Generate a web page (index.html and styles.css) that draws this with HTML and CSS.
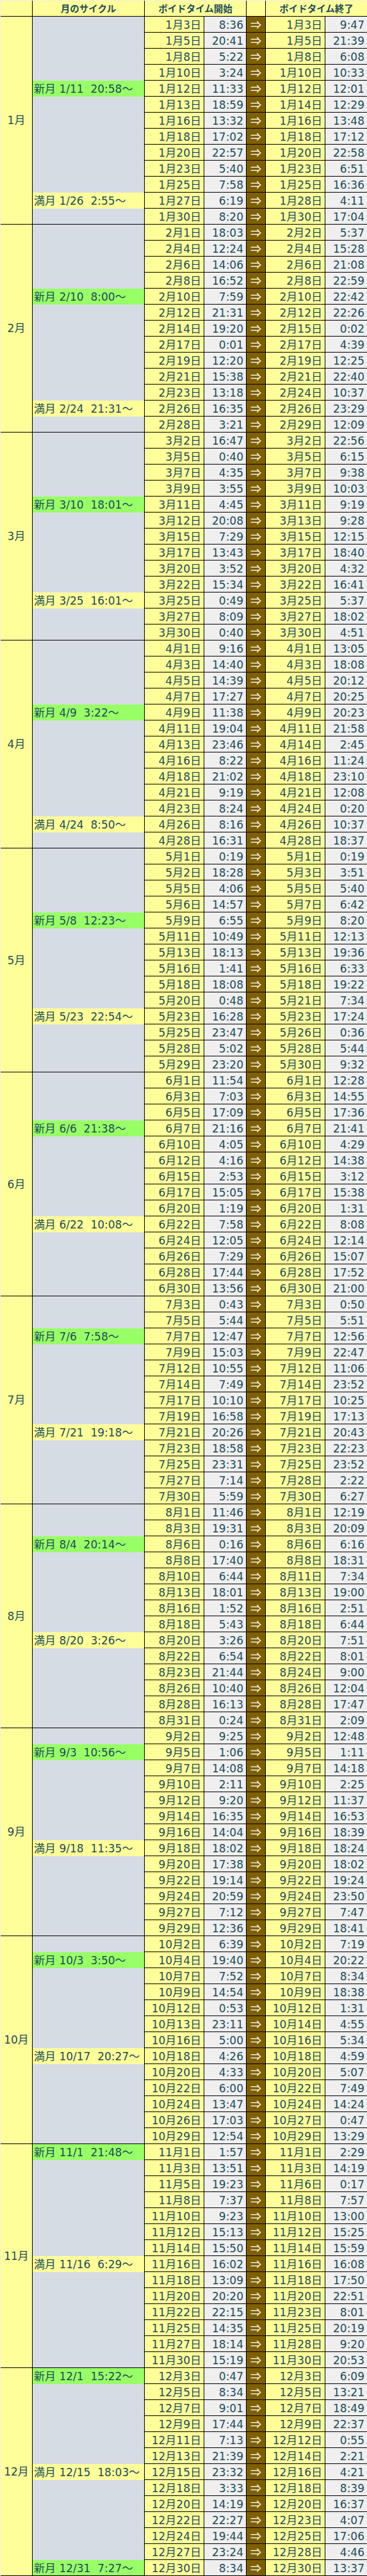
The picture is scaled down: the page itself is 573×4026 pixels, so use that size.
FILE: index.html
```html
<!DOCTYPE html>
<html lang="ja">
<head>
<meta charset="utf-8">
<title>ボイドタイム</title>
<link rel="stylesheet" href="styles.css">
</head>
<body>
<div class="sheet">
<div class="grid">
<div class="c h"></div><div class="c h">月のサイクル</div><div class="c h hs">ボイドタイム開始</div><div class="c h"></div><div class="c h hs e">ボイドタイム終了</div>

<div class="c m m13">1月</div><div class="c cy"></div><div class="c d">1月3日</div><div class="c t">8:36</div><div class="c a">⇒</div><div class="c d">1月3日</div><div class="c t e">9:47</div>
<div class="c cy"></div><div class="c d">1月5日</div><div class="c t">20:41</div><div class="c a">⇒</div><div class="c d">1月5日</div><div class="c t e">21:39</div>
<div class="c cy"></div><div class="c d">1月8日</div><div class="c t">5:22</div><div class="c a">⇒</div><div class="c d">1月8日</div><div class="c t e">6:08</div>
<div class="c cy"></div><div class="c d">1月10日</div><div class="c t">3:24</div><div class="c a">⇒</div><div class="c d">1月10日</div><div class="c t e">10:33</div>
<div class="c cy new">新月 1/11  20:58～</div><div class="c d">1月12日</div><div class="c t">11:33</div><div class="c a">⇒</div><div class="c d">1月12日</div><div class="c t e">12:01</div>
<div class="c cy"></div><div class="c d">1月13日</div><div class="c t">18:59</div><div class="c a">⇒</div><div class="c d">1月14日</div><div class="c t e">12:29</div>
<div class="c cy"></div><div class="c d">1月16日</div><div class="c t">13:32</div><div class="c a">⇒</div><div class="c d">1月16日</div><div class="c t e">13:48</div>
<div class="c cy"></div><div class="c d">1月18日</div><div class="c t">17:02</div><div class="c a">⇒</div><div class="c d">1月18日</div><div class="c t e">17:12</div>
<div class="c cy"></div><div class="c d">1月20日</div><div class="c t">22:57</div><div class="c a">⇒</div><div class="c d">1月20日</div><div class="c t e">22:58</div>
<div class="c cy"></div><div class="c d">1月23日</div><div class="c t">5:40</div><div class="c a">⇒</div><div class="c d">1月23日</div><div class="c t e">6:51</div>
<div class="c cy"></div><div class="c d">1月25日</div><div class="c t">7:58</div><div class="c a">⇒</div><div class="c d">1月25日</div><div class="c t e">16:36</div>
<div class="c cy full">満月 1/26  2:55～</div><div class="c d">1月27日</div><div class="c t">6:19</div><div class="c a">⇒</div><div class="c d">1月28日</div><div class="c t e">4:11</div>
<div class="c cy last"></div><div class="c d">1月30日</div><div class="c t">8:20</div><div class="c a">⇒</div><div class="c d">1月30日</div><div class="c t e">17:04</div>

<div class="c m m13">2月</div><div class="c cy"></div><div class="c d">2月1日</div><div class="c t">18:03</div><div class="c a">⇒</div><div class="c d">2月2日</div><div class="c t e">5:37</div>
<div class="c cy"></div><div class="c d">2月4日</div><div class="c t">12:24</div><div class="c a">⇒</div><div class="c d">2月4日</div><div class="c t e">15:28</div>
<div class="c cy"></div><div class="c d">2月6日</div><div class="c t">14:06</div><div class="c a">⇒</div><div class="c d">2月6日</div><div class="c t e">21:08</div>
<div class="c cy"></div><div class="c d">2月8日</div><div class="c t">16:52</div><div class="c a">⇒</div><div class="c d">2月8日</div><div class="c t e">22:59</div>
<div class="c cy new">新月 2/10  8:00～</div><div class="c d">2月10日</div><div class="c t">7:59</div><div class="c a">⇒</div><div class="c d">2月10日</div><div class="c t e">22:42</div>
<div class="c cy"></div><div class="c d">2月12日</div><div class="c t">21:31</div><div class="c a">⇒</div><div class="c d">2月12日</div><div class="c t e">22:26</div>
<div class="c cy"></div><div class="c d">2月14日</div><div class="c t">19:20</div><div class="c a">⇒</div><div class="c d">2月15日</div><div class="c t e">0:02</div>
<div class="c cy"></div><div class="c d">2月17日</div><div class="c t">0:01</div><div class="c a">⇒</div><div class="c d">2月17日</div><div class="c t e">4:39</div>
<div class="c cy"></div><div class="c d">2月19日</div><div class="c t">12:20</div><div class="c a">⇒</div><div class="c d">2月19日</div><div class="c t e">12:25</div>
<div class="c cy"></div><div class="c d">2月21日</div><div class="c t">15:38</div><div class="c a">⇒</div><div class="c d">2月21日</div><div class="c t e">22:40</div>
<div class="c cy"></div><div class="c d">2月23日</div><div class="c t">13:18</div><div class="c a">⇒</div><div class="c d">2月24日</div><div class="c t e">10:37</div>
<div class="c cy full">満月 2/24  21:31～</div><div class="c d">2月26日</div><div class="c t">16:35</div><div class="c a">⇒</div><div class="c d">2月26日</div><div class="c t e">23:29</div>
<div class="c cy last"></div><div class="c d">2月28日</div><div class="c t">3:21</div><div class="c a">⇒</div><div class="c d">2月29日</div><div class="c t e">12:09</div>

<div class="c m m13">3月</div><div class="c cy"></div><div class="c d">3月2日</div><div class="c t">16:47</div><div class="c a">⇒</div><div class="c d">3月2日</div><div class="c t e">22:56</div>
<div class="c cy"></div><div class="c d">3月5日</div><div class="c t">0:40</div><div class="c a">⇒</div><div class="c d">3月5日</div><div class="c t e">6:15</div>
<div class="c cy"></div><div class="c d">3月7日</div><div class="c t">4:35</div><div class="c a">⇒</div><div class="c d">3月7日</div><div class="c t e">9:38</div>
<div class="c cy"></div><div class="c d">3月9日</div><div class="c t">3:55</div><div class="c a">⇒</div><div class="c d">3月9日</div><div class="c t e">10:03</div>
<div class="c cy new">新月 3/10  18:01～</div><div class="c d">3月11日</div><div class="c t">4:45</div><div class="c a">⇒</div><div class="c d">3月11日</div><div class="c t e">9:19</div>
<div class="c cy"></div><div class="c d">3月12日</div><div class="c t">20:08</div><div class="c a">⇒</div><div class="c d">3月13日</div><div class="c t e">9:28</div>
<div class="c cy"></div><div class="c d">3月15日</div><div class="c t">7:29</div><div class="c a">⇒</div><div class="c d">3月15日</div><div class="c t e">12:15</div>
<div class="c cy"></div><div class="c d">3月17日</div><div class="c t">13:43</div><div class="c a">⇒</div><div class="c d">3月17日</div><div class="c t e">18:40</div>
<div class="c cy"></div><div class="c d">3月20日</div><div class="c t">3:52</div><div class="c a">⇒</div><div class="c d">3月20日</div><div class="c t e">4:32</div>
<div class="c cy"></div><div class="c d">3月22日</div><div class="c t">15:34</div><div class="c a">⇒</div><div class="c d">3月22日</div><div class="c t e">16:41</div>
<div class="c cy full">満月 3/25  16:01～</div><div class="c d">3月25日</div><div class="c t">0:49</div><div class="c a">⇒</div><div class="c d">3月25日</div><div class="c t e">5:37</div>
<div class="c cy"></div><div class="c d">3月27日</div><div class="c t">8:09</div><div class="c a">⇒</div><div class="c d">3月27日</div><div class="c t e">18:02</div>
<div class="c cy last"></div><div class="c d">3月30日</div><div class="c t">0:40</div><div class="c a">⇒</div><div class="c d">3月30日</div><div class="c t e">4:51</div>

<div class="c m m13">4月</div><div class="c cy"></div><div class="c d">4月1日</div><div class="c t">9:16</div><div class="c a">⇒</div><div class="c d">4月1日</div><div class="c t e">13:05</div>
<div class="c cy"></div><div class="c d">4月3日</div><div class="c t">14:40</div><div class="c a">⇒</div><div class="c d">4月3日</div><div class="c t e">18:08</div>
<div class="c cy"></div><div class="c d">4月5日</div><div class="c t">14:39</div><div class="c a">⇒</div><div class="c d">4月5日</div><div class="c t e">20:12</div>
<div class="c cy"></div><div class="c d">4月7日</div><div class="c t">17:27</div><div class="c a">⇒</div><div class="c d">4月7日</div><div class="c t e">20:25</div>
<div class="c cy new">新月 4/9  3:22～</div><div class="c d">4月9日</div><div class="c t">11:38</div><div class="c a">⇒</div><div class="c d">4月9日</div><div class="c t e">20:23</div>
<div class="c cy"></div><div class="c d">4月11日</div><div class="c t">19:04</div><div class="c a">⇒</div><div class="c d">4月11日</div><div class="c t e">21:58</div>
<div class="c cy"></div><div class="c d">4月13日</div><div class="c t">23:46</div><div class="c a">⇒</div><div class="c d">4月14日</div><div class="c t e">2:45</div>
<div class="c cy"></div><div class="c d">4月16日</div><div class="c t">8:22</div><div class="c a">⇒</div><div class="c d">4月16日</div><div class="c t e">11:24</div>
<div class="c cy"></div><div class="c d">4月18日</div><div class="c t">21:02</div><div class="c a">⇒</div><div class="c d">4月18日</div><div class="c t e">23:10</div>
<div class="c cy"></div><div class="c d">4月21日</div><div class="c t">9:19</div><div class="c a">⇒</div><div class="c d">4月21日</div><div class="c t e">12:08</div>
<div class="c cy"></div><div class="c d">4月23日</div><div class="c t">8:24</div><div class="c a">⇒</div><div class="c d">4月24日</div><div class="c t e">0:20</div>
<div class="c cy full">満月 4/24  8:50～</div><div class="c d">4月26日</div><div class="c t">8:16</div><div class="c a">⇒</div><div class="c d">4月26日</div><div class="c t e">10:37</div>
<div class="c cy last"></div><div class="c d">4月28日</div><div class="c t">16:31</div><div class="c a">⇒</div><div class="c d">4月28日</div><div class="c t e">18:37</div>

<div class="c m m14">5月</div><div class="c cy"></div><div class="c d">5月1日</div><div class="c t">0:19</div><div class="c a">⇒</div><div class="c d">5月1日</div><div class="c t e">0:19</div>
<div class="c cy"></div><div class="c d">5月2日</div><div class="c t">18:28</div><div class="c a">⇒</div><div class="c d">5月3日</div><div class="c t e">3:51</div>
<div class="c cy"></div><div class="c d">5月5日</div><div class="c t">4:06</div><div class="c a">⇒</div><div class="c d">5月5日</div><div class="c t e">5:40</div>
<div class="c cy"></div><div class="c d">5月6日</div><div class="c t">14:57</div><div class="c a">⇒</div><div class="c d">5月7日</div><div class="c t e">6:42</div>
<div class="c cy new">新月 5/8  12:23～</div><div class="c d">5月9日</div><div class="c t">6:55</div><div class="c a">⇒</div><div class="c d">5月9日</div><div class="c t e">8:20</div>
<div class="c cy"></div><div class="c d">5月11日</div><div class="c t">10:49</div><div class="c a">⇒</div><div class="c d">5月11日</div><div class="c t e">12:13</div>
<div class="c cy"></div><div class="c d">5月13日</div><div class="c t">18:13</div><div class="c a">⇒</div><div class="c d">5月13日</div><div class="c t e">19:36</div>
<div class="c cy"></div><div class="c d">5月16日</div><div class="c t">1:41</div><div class="c a">⇒</div><div class="c d">5月16日</div><div class="c t e">6:33</div>
<div class="c cy"></div><div class="c d">5月18日</div><div class="c t">18:08</div><div class="c a">⇒</div><div class="c d">5月18日</div><div class="c t e">19:22</div>
<div class="c cy"></div><div class="c d">5月20日</div><div class="c t">0:48</div><div class="c a">⇒</div><div class="c d">5月21日</div><div class="c t e">7:34</div>
<div class="c cy full">満月 5/23  22:54～</div><div class="c d">5月23日</div><div class="c t">16:28</div><div class="c a">⇒</div><div class="c d">5月23日</div><div class="c t e">17:24</div>
<div class="c cy"></div><div class="c d">5月25日</div><div class="c t">23:47</div><div class="c a">⇒</div><div class="c d">5月26日</div><div class="c t e">0:36</div>
<div class="c cy"></div><div class="c d">5月28日</div><div class="c t">5:02</div><div class="c a">⇒</div><div class="c d">5月28日</div><div class="c t e">5:44</div>
<div class="c cy last"></div><div class="c d">5月29日</div><div class="c t">23:20</div><div class="c a">⇒</div><div class="c d">5月30日</div><div class="c t e">9:32</div>

<div class="c m m14">6月</div><div class="c cy"></div><div class="c d">6月1日</div><div class="c t">11:54</div><div class="c a">⇒</div><div class="c d">6月1日</div><div class="c t e">12:28</div>
<div class="c cy"></div><div class="c d">6月3日</div><div class="c t">7:03</div><div class="c a">⇒</div><div class="c d">6月3日</div><div class="c t e">14:55</div>
<div class="c cy"></div><div class="c d">6月5日</div><div class="c t">17:09</div><div class="c a">⇒</div><div class="c d">6月5日</div><div class="c t e">17:36</div>
<div class="c cy new">新月 6/6  21:38～</div><div class="c d">6月7日</div><div class="c t">21:16</div><div class="c a">⇒</div><div class="c d">6月7日</div><div class="c t e">21:41</div>
<div class="c cy"></div><div class="c d">6月10日</div><div class="c t">4:05</div><div class="c a">⇒</div><div class="c d">6月10日</div><div class="c t e">4:29</div>
<div class="c cy"></div><div class="c d">6月12日</div><div class="c t">4:16</div><div class="c a">⇒</div><div class="c d">6月12日</div><div class="c t e">14:38</div>
<div class="c cy"></div><div class="c d">6月15日</div><div class="c t">2:53</div><div class="c a">⇒</div><div class="c d">6月15日</div><div class="c t e">3:12</div>
<div class="c cy"></div><div class="c d">6月17日</div><div class="c t">15:05</div><div class="c a">⇒</div><div class="c d">6月17日</div><div class="c t e">15:38</div>
<div class="c cy"></div><div class="c d">6月20日</div><div class="c t">1:19</div><div class="c a">⇒</div><div class="c d">6月20日</div><div class="c t e">1:31</div>
<div class="c cy full">満月 6/22  10:08～</div><div class="c d">6月22日</div><div class="c t">7:58</div><div class="c a">⇒</div><div class="c d">6月22日</div><div class="c t e">8:08</div>
<div class="c cy"></div><div class="c d">6月24日</div><div class="c t">12:05</div><div class="c a">⇒</div><div class="c d">6月24日</div><div class="c t e">12:14</div>
<div class="c cy"></div><div class="c d">6月26日</div><div class="c t">7:29</div><div class="c a">⇒</div><div class="c d">6月26日</div><div class="c t e">15:07</div>
<div class="c cy"></div><div class="c d">6月28日</div><div class="c t">17:44</div><div class="c a">⇒</div><div class="c d">6月28日</div><div class="c t e">17:52</div>
<div class="c cy last"></div><div class="c d">6月30日</div><div class="c t">13:56</div><div class="c a">⇒</div><div class="c d">6月30日</div><div class="c t e">21:00</div>

<div class="c m m13">7月</div><div class="c cy"></div><div class="c d">7月3日</div><div class="c t">0:43</div><div class="c a">⇒</div><div class="c d">7月3日</div><div class="c t e">0:50</div>
<div class="c cy"></div><div class="c d">7月5日</div><div class="c t">5:44</div><div class="c a">⇒</div><div class="c d">7月5日</div><div class="c t e">5:51</div>
<div class="c cy new">新月 7/6  7:58～</div><div class="c d">7月7日</div><div class="c t">12:47</div><div class="c a">⇒</div><div class="c d">7月7日</div><div class="c t e">12:56</div>
<div class="c cy"></div><div class="c d">7月9日</div><div class="c t">15:03</div><div class="c a">⇒</div><div class="c d">7月9日</div><div class="c t e">22:47</div>
<div class="c cy"></div><div class="c d">7月12日</div><div class="c t">10:55</div><div class="c a">⇒</div><div class="c d">7月12日</div><div class="c t e">11:06</div>
<div class="c cy"></div><div class="c d">7月14日</div><div class="c t">7:49</div><div class="c a">⇒</div><div class="c d">7月14日</div><div class="c t e">23:52</div>
<div class="c cy"></div><div class="c d">7月17日</div><div class="c t">10:10</div><div class="c a">⇒</div><div class="c d">7月17日</div><div class="c t e">10:25</div>
<div class="c cy"></div><div class="c d">7月19日</div><div class="c t">16:58</div><div class="c a">⇒</div><div class="c d">7月19日</div><div class="c t e">17:13</div>
<div class="c cy full">満月 7/21  19:18～</div><div class="c d">7月21日</div><div class="c t">20:26</div><div class="c a">⇒</div><div class="c d">7月21日</div><div class="c t e">20:43</div>
<div class="c cy"></div><div class="c d">7月23日</div><div class="c t">18:58</div><div class="c a">⇒</div><div class="c d">7月23日</div><div class="c t e">22:23</div>
<div class="c cy"></div><div class="c d">7月25日</div><div class="c t">23:31</div><div class="c a">⇒</div><div class="c d">7月25日</div><div class="c t e">23:52</div>
<div class="c cy"></div><div class="c d">7月27日</div><div class="c t">7:14</div><div class="c a">⇒</div><div class="c d">7月28日</div><div class="c t e">2:22</div>
<div class="c cy last"></div><div class="c d">7月30日</div><div class="c t">5:59</div><div class="c a">⇒</div><div class="c d">7月30日</div><div class="c t e">6:27</div>

<div class="c m m14">8月</div><div class="c cy"></div><div class="c d">8月1日</div><div class="c t">11:46</div><div class="c a">⇒</div><div class="c d">8月1日</div><div class="c t e">12:19</div>
<div class="c cy"></div><div class="c d">8月3日</div><div class="c t">19:31</div><div class="c a">⇒</div><div class="c d">8月3日</div><div class="c t e">20:09</div>
<div class="c cy new">新月 8/4  20:14～</div><div class="c d">8月6日</div><div class="c t">0:16</div><div class="c a">⇒</div><div class="c d">8月6日</div><div class="c t e">6:16</div>
<div class="c cy"></div><div class="c d">8月8日</div><div class="c t">17:40</div><div class="c a">⇒</div><div class="c d">8月8日</div><div class="c t e">18:31</div>
<div class="c cy"></div><div class="c d">8月10日</div><div class="c t">6:44</div><div class="c a">⇒</div><div class="c d">8月11日</div><div class="c t e">7:34</div>
<div class="c cy"></div><div class="c d">8月13日</div><div class="c t">18:01</div><div class="c a">⇒</div><div class="c d">8月13日</div><div class="c t e">19:00</div>
<div class="c cy"></div><div class="c d">8月16日</div><div class="c t">1:52</div><div class="c a">⇒</div><div class="c d">8月16日</div><div class="c t e">2:51</div>
<div class="c cy"></div><div class="c d">8月18日</div><div class="c t">5:43</div><div class="c a">⇒</div><div class="c d">8月18日</div><div class="c t e">6:44</div>
<div class="c cy full">満月 8/20  3:26～</div><div class="c d">8月20日</div><div class="c t">3:26</div><div class="c a">⇒</div><div class="c d">8月20日</div><div class="c t e">7:51</div>
<div class="c cy"></div><div class="c d">8月22日</div><div class="c t">6:54</div><div class="c a">⇒</div><div class="c d">8月22日</div><div class="c t e">8:01</div>
<div class="c cy"></div><div class="c d">8月23日</div><div class="c t">21:44</div><div class="c a">⇒</div><div class="c d">8月24日</div><div class="c t e">9:00</div>
<div class="c cy"></div><div class="c d">8月26日</div><div class="c t">10:40</div><div class="c a">⇒</div><div class="c d">8月26日</div><div class="c t e">12:04</div>
<div class="c cy"></div><div class="c d">8月28日</div><div class="c t">16:13</div><div class="c a">⇒</div><div class="c d">8月28日</div><div class="c t e">17:47</div>
<div class="c cy last"></div><div class="c d">8月31日</div><div class="c t">0:24</div><div class="c a">⇒</div><div class="c d">8月31日</div><div class="c t e">2:09</div>

<div class="c m m13">9月</div><div class="c cy"></div><div class="c d">9月2日</div><div class="c t">9:25</div><div class="c a">⇒</div><div class="c d">9月2日</div><div class="c t e">12:48</div>
<div class="c cy new">新月 9/3  10:56～</div><div class="c d">9月5日</div><div class="c t">1:06</div><div class="c a">⇒</div><div class="c d">9月5日</div><div class="c t e">1:11</div>
<div class="c cy"></div><div class="c d">9月7日</div><div class="c t">14:08</div><div class="c a">⇒</div><div class="c d">9月7日</div><div class="c t e">14:18</div>
<div class="c cy"></div><div class="c d">9月10日</div><div class="c t">2:11</div><div class="c a">⇒</div><div class="c d">9月10日</div><div class="c t e">2:25</div>
<div class="c cy"></div><div class="c d">9月12日</div><div class="c t">9:20</div><div class="c a">⇒</div><div class="c d">9月12日</div><div class="c t e">11:37</div>
<div class="c cy"></div><div class="c d">9月14日</div><div class="c t">16:35</div><div class="c a">⇒</div><div class="c d">9月14日</div><div class="c t e">16:53</div>
<div class="c cy"></div><div class="c d">9月16日</div><div class="c t">14:04</div><div class="c a">⇒</div><div class="c d">9月16日</div><div class="c t e">18:39</div>
<div class="c cy full">満月 9/18  11:35～</div><div class="c d">9月18日</div><div class="c t">18:02</div><div class="c a">⇒</div><div class="c d">9月18日</div><div class="c t e">18:24</div>
<div class="c cy"></div><div class="c d">9月20日</div><div class="c t">17:38</div><div class="c a">⇒</div><div class="c d">9月20日</div><div class="c t e">18:02</div>
<div class="c cy"></div><div class="c d">9月22日</div><div class="c t">19:14</div><div class="c a">⇒</div><div class="c d">9月22日</div><div class="c t e">19:24</div>
<div class="c cy"></div><div class="c d">9月24日</div><div class="c t">20:59</div><div class="c a">⇒</div><div class="c d">9月24日</div><div class="c t e">23:50</div>
<div class="c cy"></div><div class="c d">9月27日</div><div class="c t">7:12</div><div class="c a">⇒</div><div class="c d">9月27日</div><div class="c t e">7:47</div>
<div class="c cy last"></div><div class="c d">9月29日</div><div class="c t">12:36</div><div class="c a">⇒</div><div class="c d">9月29日</div><div class="c t e">18:41</div>

<div class="c m m13">10月</div><div class="c cy"></div><div class="c d">10月2日</div><div class="c t">6:39</div><div class="c a">⇒</div><div class="c d">10月2日</div><div class="c t e">7:19</div>
<div class="c cy new">新月 10/3  3:50～</div><div class="c d">10月4日</div><div class="c t">19:40</div><div class="c a">⇒</div><div class="c d">10月4日</div><div class="c t e">20:22</div>
<div class="c cy"></div><div class="c d">10月7日</div><div class="c t">7:52</div><div class="c a">⇒</div><div class="c d">10月7日</div><div class="c t e">8:34</div>
<div class="c cy"></div><div class="c d">10月9日</div><div class="c t">14:54</div><div class="c a">⇒</div><div class="c d">10月9日</div><div class="c t e">18:38</div>
<div class="c cy"></div><div class="c d">10月12日</div><div class="c t">0:53</div><div class="c a">⇒</div><div class="c d">10月12日</div><div class="c t e">1:31</div>
<div class="c cy"></div><div class="c d">10月13日</div><div class="c t">23:11</div><div class="c a">⇒</div><div class="c d">10月14日</div><div class="c t e">4:55</div>
<div class="c cy"></div><div class="c d">10月16日</div><div class="c t">5:00</div><div class="c a">⇒</div><div class="c d">10月16日</div><div class="c t e">5:34</div>
<div class="c cy full">満月 10/17  20:27～</div><div class="c d">10月18日</div><div class="c t">4:26</div><div class="c a">⇒</div><div class="c d">10月18日</div><div class="c t e">4:59</div>
<div class="c cy"></div><div class="c d">10月20日</div><div class="c t">4:33</div><div class="c a">⇒</div><div class="c d">10月20日</div><div class="c t e">5:07</div>
<div class="c cy"></div><div class="c d">10月22日</div><div class="c t">6:00</div><div class="c a">⇒</div><div class="c d">10月22日</div><div class="c t e">7:49</div>
<div class="c cy"></div><div class="c d">10月24日</div><div class="c t">13:47</div><div class="c a">⇒</div><div class="c d">10月24日</div><div class="c t e">14:24</div>
<div class="c cy"></div><div class="c d">10月26日</div><div class="c t">17:03</div><div class="c a">⇒</div><div class="c d">10月27日</div><div class="c t e">0:47</div>
<div class="c cy last"></div><div class="c d">10月29日</div><div class="c t">12:54</div><div class="c a">⇒</div><div class="c d">10月29日</div><div class="c t e">13:29</div>

<div class="c m m14">11月</div><div class="c cy new">新月 11/1  21:48～</div><div class="c d">11月1日</div><div class="c t">1:57</div><div class="c a">⇒</div><div class="c d">11月1日</div><div class="c t e">2:29</div>
<div class="c cy"></div><div class="c d">11月3日</div><div class="c t">13:51</div><div class="c a">⇒</div><div class="c d">11月3日</div><div class="c t e">14:19</div>
<div class="c cy"></div><div class="c d">11月5日</div><div class="c t">19:23</div><div class="c a">⇒</div><div class="c d">11月6日</div><div class="c t e">0:17</div>
<div class="c cy"></div><div class="c d">11月8日</div><div class="c t">7:37</div><div class="c a">⇒</div><div class="c d">11月8日</div><div class="c t e">7:57</div>
<div class="c cy"></div><div class="c d">11月10日</div><div class="c t">9:23</div><div class="c a">⇒</div><div class="c d">11月10日</div><div class="c t e">13:00</div>
<div class="c cy"></div><div class="c d">11月12日</div><div class="c t">15:13</div><div class="c a">⇒</div><div class="c d">11月12日</div><div class="c t e">15:25</div>
<div class="c cy"></div><div class="c d">11月14日</div><div class="c t">15:50</div><div class="c a">⇒</div><div class="c d">11月14日</div><div class="c t e">15:59</div>
<div class="c cy full">満月 11/16  6:29～</div><div class="c d">11月16日</div><div class="c t">16:02</div><div class="c a">⇒</div><div class="c d">11月16日</div><div class="c t e">16:08</div>
<div class="c cy"></div><div class="c d">11月18日</div><div class="c t">13:09</div><div class="c a">⇒</div><div class="c d">11月18日</div><div class="c t e">17:50</div>
<div class="c cy"></div><div class="c d">11月20日</div><div class="c t">20:20</div><div class="c a">⇒</div><div class="c d">11月20日</div><div class="c t e">22:51</div>
<div class="c cy"></div><div class="c d">11月22日</div><div class="c t">22:15</div><div class="c a">⇒</div><div class="c d">11月23日</div><div class="c t e">8:01</div>
<div class="c cy"></div><div class="c d">11月25日</div><div class="c t">14:35</div><div class="c a">⇒</div><div class="c d">11月25日</div><div class="c t e">20:19</div>
<div class="c cy"></div><div class="c d">11月27日</div><div class="c t">18:14</div><div class="c a">⇒</div><div class="c d">11月28日</div><div class="c t e">9:20</div>
<div class="c cy last"></div><div class="c d">11月30日</div><div class="c t">15:19</div><div class="c a">⇒</div><div class="c d">11月30日</div><div class="c t e">20:53</div>

<div class="c m m13">12月</div><div class="c cy new">新月 12/1  15:22～</div><div class="c d">12月3日</div><div class="c t">0:47</div><div class="c a">⇒</div><div class="c d">12月3日</div><div class="c t e">6:09</div>
<div class="c cy"></div><div class="c d">12月5日</div><div class="c t">8:34</div><div class="c a">⇒</div><div class="c d">12月5日</div><div class="c t e">13:21</div>
<div class="c cy"></div><div class="c d">12月7日</div><div class="c t">9:01</div><div class="c a">⇒</div><div class="c d">12月7日</div><div class="c t e">18:49</div>
<div class="c cy"></div><div class="c d">12月9日</div><div class="c t">17:44</div><div class="c a">⇒</div><div class="c d">12月9日</div><div class="c t e">22:37</div>
<div class="c cy"></div><div class="c d">12月11日</div><div class="c t">7:13</div><div class="c a">⇒</div><div class="c d">12月12日</div><div class="c t e">0:55</div>
<div class="c cy"></div><div class="c d">12月13日</div><div class="c t">21:39</div><div class="c a">⇒</div><div class="c d">12月14日</div><div class="c t e">2:21</div>
<div class="c cy full">満月 12/15  18:03～</div><div class="c d">12月15日</div><div class="c t">23:32</div><div class="c a">⇒</div><div class="c d">12月16日</div><div class="c t e">4:21</div>
<div class="c cy"></div><div class="c d">12月18日</div><div class="c t">3:33</div><div class="c a">⇒</div><div class="c d">12月18日</div><div class="c t e">8:39</div>
<div class="c cy"></div><div class="c d">12月20日</div><div class="c t">14:19</div><div class="c a">⇒</div><div class="c d">12月20日</div><div class="c t e">16:37</div>
<div class="c cy"></div><div class="c d">12月22日</div><div class="c t">22:27</div><div class="c a">⇒</div><div class="c d">12月23日</div><div class="c t e">4:07</div>
<div class="c cy"></div><div class="c d">12月24日</div><div class="c t">19:44</div><div class="c a">⇒</div><div class="c d">12月25日</div><div class="c t e">17:06</div>
<div class="c cy"></div><div class="c d">12月27日</div><div class="c t">23:24</div><div class="c a">⇒</div><div class="c d">12月28日</div><div class="c t e">4:46</div>
<div class="c cy new last">新月 12/31  7:27～</div><div class="c d">12月30日</div><div class="c t">8:34</div><div class="c a">⇒</div><div class="c d">12月30日</div><div class="c t e">13:37</div>
</div>
</div>
</body>
</html>
```

FILE: styles.css
```css
html, body {
  margin: 0;
  padding: 0;
  background: #eeeeee;
}

.sheet {
  padding: 1px 0 0 1px;
  width: 572px;
}

.grid {
  display: grid;
  grid-template-columns: 50px 175px 93px 66px 30px 93px 65px;
  grid-auto-rows: 25px;
  font-family: "DejaVu Sans", "Noto Sans CJK JP", sans-serif;
  font-size: 17px;
  color: #1a4c5c;
}

.c {
  box-sizing: border-box;
  border-right: 1px solid #000;
  border-bottom: 1px solid #000;
  line-height: 26px;
  white-space: nowrap;
  overflow: hidden;
}

.h {
  background: #ffff99;
  font-family: "Noto Sans CJK JP", sans-serif;
  font-weight: 700;
  font-size: 14.5px;
  line-height: 24px;
  text-align: center;
}

.hs {
  grid-column: span 2;
}

.e {
  border-right: none;
}

.m {
  background: #ffff99;
  display: flex;
  align-items: center;
  justify-content: center;
  line-height: 24px;
}

.m13 {
  grid-row: span 13;
}

.m14 {
  grid-row: span 14;
}

.cy {
  background: #d6dce4;
  border-bottom: none;
  white-space: pre;
  padding-left: 2px;
}

.cy.last {
  border-bottom: 1px solid #000;
}

.cy.new {
  background: #99ff66;
}

.cy.full {
  background: #ffff99;
}

.d {
  background: #ffff99;
  text-align: right;
  padding-right: 4px;
}

.t {
  background: #efefef;
  text-align: right;
  padding-right: 4px;
}

.a {
  background: #7f6000;
  color: #ffffff;
  font-family: "Noto Sans CJK JP", sans-serif;
  line-height: 24px;
  text-align: center;
}
```
